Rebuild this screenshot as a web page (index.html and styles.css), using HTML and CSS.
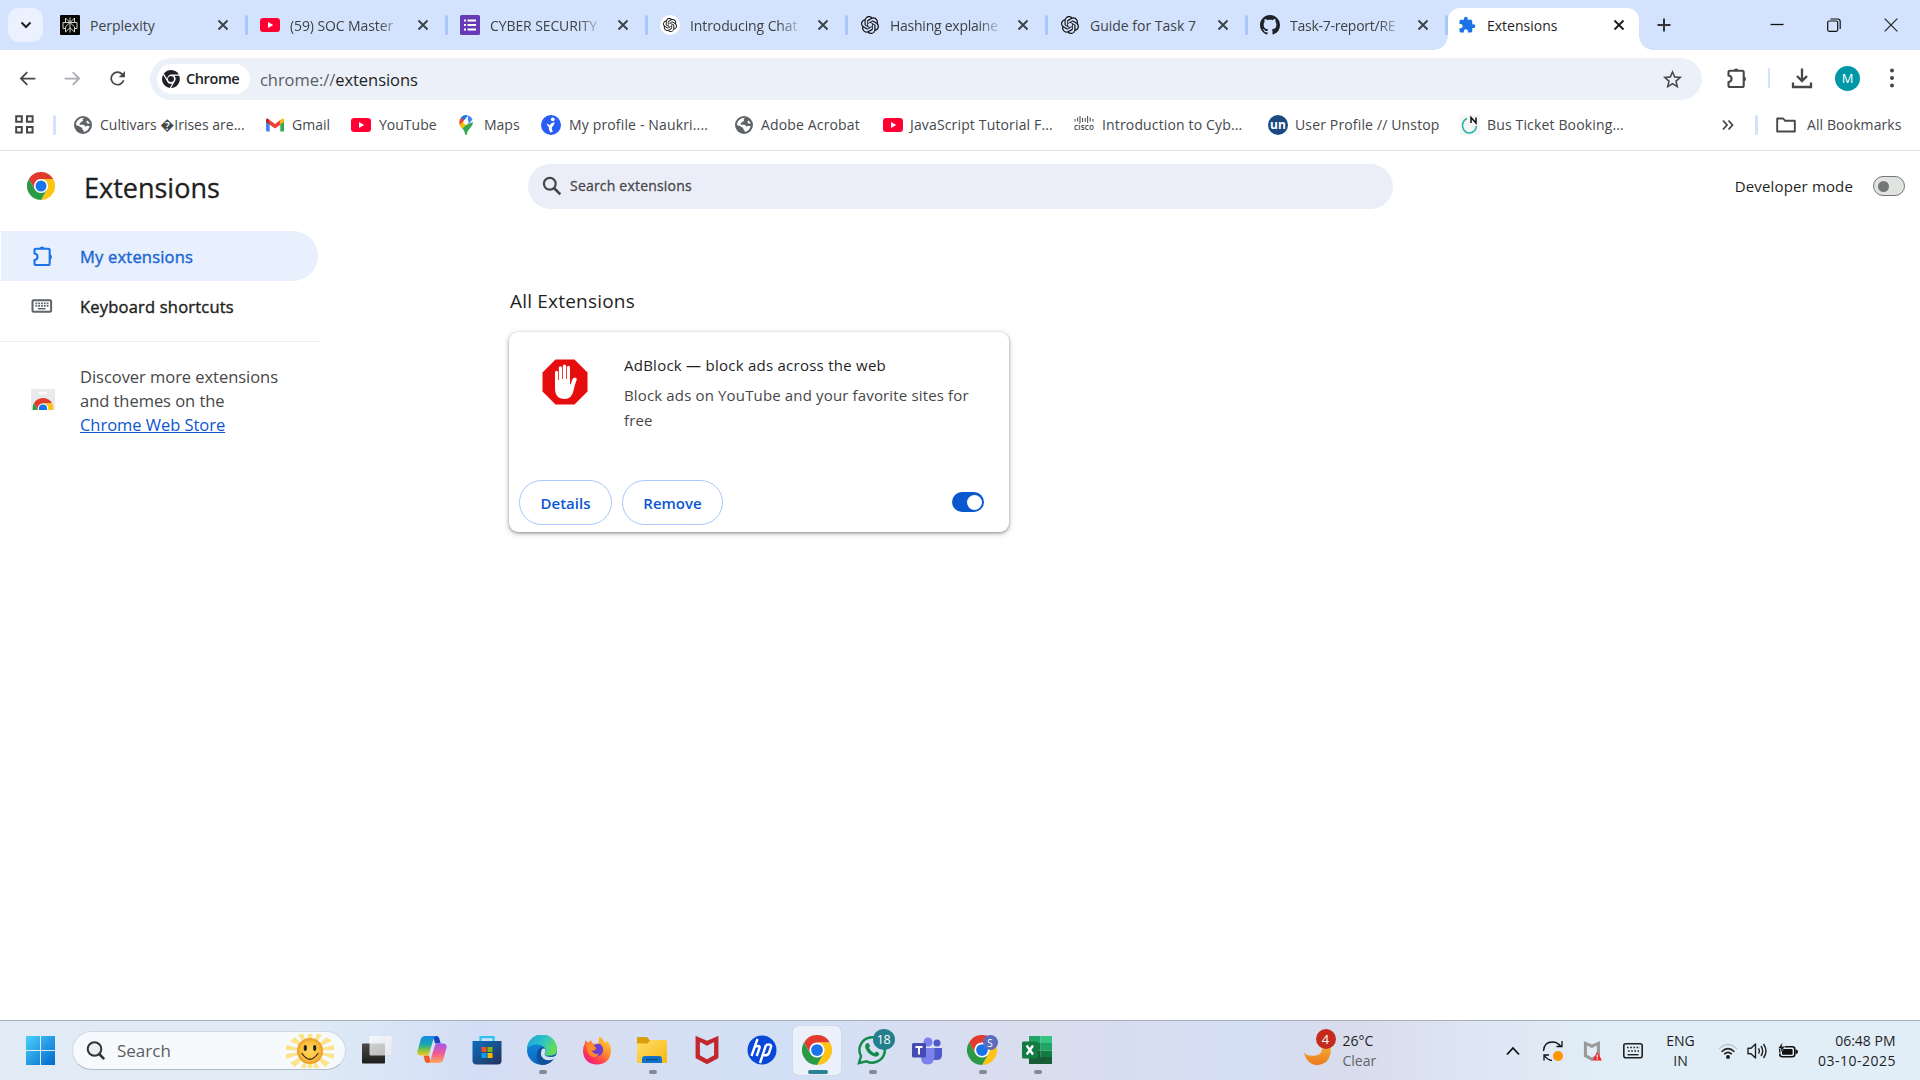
FILE: index.html
```html
<!DOCTYPE html>
<html lang="en">
<head>
<meta charset="utf-8">
<title>Extensions</title>
<link rel="stylesheet" href="styles.css">
</head>
<body>
<svg class="sprite" width="0" height="0" aria-hidden="true">
  <defs>
    <linearGradient id="g-win" x1="0" y1="0" x2="1" y2="1"><stop offset="0" stop-color="#4cd0fb"/><stop offset="1" stop-color="#0067cc"/></linearGradient>
    <linearGradient id="g-cop1" x1="0" y1="0" x2="0" y2="1"><stop offset="0" stop-color="#1489e8"/><stop offset=".45" stop-color="#1ba9a8"/><stop offset=".75" stop-color="#8fc43c"/><stop offset="1" stop-color="#f8c91c"/></linearGradient>
    <linearGradient id="g-cop2" x1="0" y1="0" x2="0" y2="1"><stop offset="0" stop-color="#a457ee"/><stop offset=".5" stop-color="#ee5a94"/><stop offset="1" stop-color="#ffab5a"/></linearGradient>
    <linearGradient id="g-store" x1="0" y1="0" x2="1" y2="1"><stop offset="0" stop-color="#0a70c0"/><stop offset="1" stop-color="#27305a"/></linearGradient>
    <linearGradient id="g-edge" x1="0" y1="0" x2="1" y2=".4"><stop offset="0" stop-color="#1a9fe0"/><stop offset=".6" stop-color="#2fc5c4"/><stop offset="1" stop-color="#62dc57"/></linearGradient>
    <linearGradient id="g-edge2" x1="0" y1="0" x2="0" y2="1"><stop offset="0" stop-color="#1590df"/><stop offset="1" stop-color="#0a68c4"/></linearGradient>
    <linearGradient id="g-fox" x1="1" y1="0" x2=".2" y2="1"><stop offset="0" stop-color="#ffe03c"/><stop offset=".4" stop-color="#ff9a2a"/><stop offset=".75" stop-color="#ff3f4d"/><stop offset="1" stop-color="#f0158c"/></linearGradient>
    <linearGradient id="g-fold" x1="0" y1="0" x2="1" y2="1"><stop offset="0" stop-color="#ffdf6a"/><stop offset="1" stop-color="#f9b811"/></linearGradient>
    <linearGradient id="g-moon" x1="0" y1="0" x2="0" y2="1"><stop offset="0" stop-color="#f6b73c"/><stop offset="1" stop-color="#ea7a1d"/></linearGradient>
    <linearGradient id="g-pane" x1="0" y1="0" x2="1" y2="1"><stop offset="0" stop-color="#fff"/><stop offset="1" stop-color="#dcdcdc"/></linearGradient>
    <radialGradient id="g-sun"><stop offset="0" stop-color="#ffd75c"/><stop offset=".7" stop-color="#fdbf3c"/><stop offset="1" stop-color="#e79a2b"/></radialGradient>
  </defs>
  <symbol id="chrome" viewBox="0 0 48 48">
    <circle cx="24" cy="24" r="14" fill="#fff"/>
    <path fill="#e23b2e" d="M24 12h20.8A24 24 0 0 0 3.2 12l10.4 18A12 12 0 0 1 24 12z"/>
    <path fill="#fdc414" d="M44.8 12H24a12 12 0 0 1 10.4 18L24 48a24 24 0 0 0 20.8-36z"/>
    <path fill="#2b9a47" d="M13.6 30L3.2 12A24 24 0 0 0 24 48l10.4-18a12 12 0 0 1-20.8 0z"/>
    <circle cx="24" cy="24" r="9.4" fill="#1a73e8"/>
  </symbol>
  <symbol id="chrome-mono" viewBox="0 0 48 48">
    <path d="M24 12h20.8A24 24 0 0 0 5 9.500l9 15A12 12 0 0 1 24 12zM46 15.500H33a12 12 0 0 1 1.400 14.500L24 48a24 24 0 0 0 22-32.500zM13 29L3 12.500A24 24 0 0 0 20.500 47.800L27 36.500A12 12 0 0 1 13 29z" fill="#202124"/>
    <circle cx="24" cy="24" r="8" fill="#202124"/>
  </symbol>
  <symbol id="x" viewBox="0 0 12 12"><path d="M1.500 1.500l9 9M10.500 1.500l-9 9" stroke="currentColor" stroke-width="1.900" fill="none"/></symbol>
  <symbol id="yt" viewBox="0 0 20 14"><rect width="20" height="14" rx="3.200" fill="#ff0033"/><path d="M8 4l5.200 3L8 10z" fill="#fff"/></symbol>
  <symbol id="openai" viewBox="0 0 24 24"><path fill="#111" d="M22.2819 9.8211a5.9847 5.9847 0 0 0-.5157-4.9108 6.0462 6.0462 0 0 0-6.5098-2.9A6.0651 6.0651 0 0 0 4.9807 4.1818a5.9847 5.9847 0 0 0-3.9977 2.9 6.0462 6.0462 0 0 0 .7427 7.0966 5.98 5.98 0 0 0 .511 4.9107 6.051 6.051 0 0 0 6.5146 2.9001A5.9847 5.9847 0 0 0 13.2599 24a6.0557 6.0557 0 0 0 5.7718-4.2058 5.9894 5.9894 0 0 0 3.9977-2.9001 6.0557 6.0557 0 0 0-.7475-7.0729zm-9.022 12.6081a4.4755 4.4755 0 0 1-2.8764-1.0408l.1419-.0804 4.7783-2.7582a.7948.7948 0 0 0 .3927-.6813v-6.7369l2.02 1.1686a.071.071 0 0 1 .038.052v5.5826a4.504 4.504 0 0 1-4.4945 4.4944zm-9.6607-4.1254a4.4708 4.4708 0 0 1-.5346-3.0137l.142.0852 4.783 2.7582a.7712.7712 0 0 0 .7806 0l5.8428-3.3685v2.3324a.0804.0804 0 0 1-.0332.0615L9.74 19.9502a4.4992 4.4992 0 0 1-6.1408-1.6464zM2.3408 7.8956a4.485 4.485 0 0 1 2.3655-1.9728V11.6a.7664.7664 0 0 0 .3879.6765l5.8144 3.3543-2.0201 1.1685a.0757.0757 0 0 1-.071 0l-4.8303-2.7865A4.504 4.504 0 0 1 2.3408 7.872zm16.5963 3.8558L13.1038 8.364 15.1192 7.2a.0757.0757 0 0 1 .071 0l4.8303 2.7913a4.4944 4.4944 0 0 1-.6765 8.1042v-5.6772a.79.79 0 0 0-.407-.667zm2.0107-3.0231l-.142-.0852-4.7735-2.7818a.7759.7759 0 0 0-.7854 0L9.409 9.2297V6.8974a.0662.0662 0 0 1 .0284-.0615l4.8303-2.7866a4.4992 4.4992 0 0 1 6.6802 4.66zM8.3065 12.863l-2.02-1.1638a.0804.0804 0 0 1-.038-.0567V6.0742a4.4992 4.4992 0 0 1 7.3757-3.4537l-.142.0805L8.704 5.459a.7948.7948 0 0 0-.3927.6813zm1.0976-2.3654l2.602-1.4998 2.6069 1.4998v2.9994l-2.5974 1.4997-2.6067-1.4997Z"/></symbol>
  <symbol id="globe" viewBox="0 0 18 18"><circle cx="9" cy="9" r="9" fill="#5f6368"/><path d="M10.500 1.800c-1.500.4-2.200 1.500-1.600 2.400.5.800-.6 1.300-1.500 1.500-.9.200-.6 1.400-1.600 1.700-.8.200-.5 1.100.2 1.300h3.200c1.500 0 1.400 1.700 2.600 1.900 1 .1 1.300-.9 2.400-.7l1.500.2C15 13 13 15.600 9.800 16.100l-.3-1.500c0-1-1.300-1-1.300-2.200 0-1-1.200-.9-2-1.600C5.200 9.900 3 9.300 1.900 9.300 2 5 5.800 1.500 10.500 1.800z" fill="#fff"/><path d="M13.200 4.500c1.400.7 2.300 2 2.500 3.300l-1.900-.4c-1.400-.2-1.900-2-.6-2.900z" fill="#fff"/></symbol>
  <symbol id="piece" viewBox="0 0 22 22"><path d="M2.500 5.200Q2.500 3.700 4 3.700H16.200Q17.700 3.700 17.700 5.200V18.500Q17.700 20 16.200 20H4Q2.500 20 2.500 18.500V15.200Q5.600 14.500 5.600 11.800T2.500 8.500Z" fill="none" stroke="currentColor" stroke-width="2.100"/><path d="M7.500 3.500a2.700 2.700 0 0 1 5.200 0zM18 9.300a2.700 2.700 0 0 1 0 5.200z" fill="currentColor"/></symbol>
  <symbol id="shield" viewBox="0 0 28 34"><path fill-rule="evenodd" d="M0 0l14 6L28 0v26.500L14 34 0 26.500zM5.500 7.500v15.700L14 28l8.500-4.800V7.500L14 12z" fill="currentColor"/></symbol>
</svg>

<header class="tabstrip">
  <button class="tabsearch"><svg width="12" height="8" viewBox="0 0 12 8"><path d="M1.500 1.500L6 6l4.500-4.500" fill="none" stroke="#1f1f1f" stroke-width="2"/></svg></button>
  <div class="tab"><svg class="fav" viewBox="0 0 20 20"><rect width="20" height="20" rx="1" fill="#060606"/><path d="M10 2.500v15M5.500 3v4.500h9V3L10 7.500zM5.500 7.500H3v6h2.500M14.500 7.500H17v6h-2.500M10 7.500l-4.500 4.300V17L10 12.700 14.500 17v-5.200z" fill="none" stroke="#d6d3cc" stroke-width="1"/></svg><span class="title">Perplexity</span><svg class="close"><use href="#x"/></svg></div>
  <div class="tab"><svg class="fav" viewBox="0 -3 20 20"><use href="#yt" width="20" height="14"/></svg><span class="title fade">(59) SOC Master</span><svg class="close"><use href="#x"/></svg></div>
  <div class="tab"><svg class="fav" viewBox="0 0 20 20"><rect width="20" height="20" rx="1.500" fill="#673ab7"/><path d="M7.500 5.500H16M7.500 10H16M7.500 14.500H16" stroke="#fff" stroke-width="2"/><path d="M4 5.500h2M4 10h2M4 14.500h2" stroke="#fff" stroke-width="2"/></svg><span class="title fade">CYBER SECURITY</span><svg class="close"><use href="#x"/></svg></div>
  <div class="tab"><svg class="fav" viewBox="0 0 20 20"><circle cx="10" cy="10" r="10" fill="#fff"/><use href="#openai" x="3" y="3" width="14" height="14"/></svg><span class="title fade">Introducing Chat</span><svg class="close"><use href="#x"/></svg></div>
  <div class="tab"><svg class="fav" viewBox="0 0 20 20"><use href="#openai" x="1" y="1" width="18" height="18"/></svg><span class="title fade tight">Hashing explaine</span><svg class="close"><use href="#x"/></svg></div>
  <div class="tab"><svg class="fav" viewBox="0 0 20 20"><use href="#openai" x="1" y="1" width="18" height="18"/></svg><span class="title">Guide for Task 7</span><svg class="close"><use href="#x"/></svg></div>
  <div class="tab"><svg class="fav" viewBox="0 0 16 16"><path fill="#1f2328" d="M8 0C3.580 0 0 3.580 0 8c0 3.540 2.290 6.530 5.470 7.590.4.070.55-.17.55-.38 0-.19-.01-.82-.01-1.490-2.010.37-2.530-.49-2.690-.94-.09-.23-.48-.94-.82-1.130-.28-.15-.68-.52-.01-.53.63-.01 1.080.58 1.230.82.720 1.210 1.870.87 2.330.66.070-.52.28-.87.51-1.070-1.780-.2-3.640-.89-3.640-3.950 0-.87.31-1.590.82-2.150-.08-.2-.36-1.020.08-2.120 0 0 .67-.21 2.200.82.640-.18 1.320-.27 2-.27s1.360.09 2 .27c1.530-1.040 2.200-.82 2.200-.82.440 1.100.16 1.920.08 2.120.51.560.82 1.270.82 2.150 0 3.070-1.870 3.750-3.650 3.950.29.250.54.730.54 1.480 0 1.070-.01 1.930-.01 2.200 0 .21.150.46.550.38A8.010 8.010 0 0 0 16 8c0-4.420-3.580-8-8-8z"/></svg><span class="title fade tight">Task-7-report/RE</span><svg class="close"><use href="#x"/></svg></div>
  <div class="tab active"><svg class="fav" viewBox="0 0 24 24"><path fill="#1a73e8" d="M20.500 11H19V7c0-1.100-.9-2-2-2h-4V3.500C13 2.120 11.880 1 10.500 1S8 2.120 8 3.500V5H4c-1.100 0-1.990.9-1.990 2v3.800H3.500c1.490 0 2.700 1.210 2.700 2.700s-1.210 2.700-2.700 2.700H2V20c0 1.100.9 2 2 2h3.800v-1.500c0-1.490 1.210-2.700 2.700-2.700s2.700 1.210 2.700 2.700V22H17c1.100 0 2-.9 2-2v-4h1.500c1.380 0 2.500-1.120 2.500-2.500S21.880 11 20.500 11z"/></svg><span class="title">Extensions</span><svg class="close"><use href="#x"/></svg></div>
  <svg class="plus" width="14" height="14" viewBox="0 0 14 14"><path d="M7 .5v13M.5 7h13" stroke="#333" stroke-width="2"/></svg>
  <div class="wincontrols">
    <svg width="14" height="14" viewBox="0 0 14 14"><path d="M.5 6.500h13" stroke="#111" stroke-width="1.300"/></svg>
    <svg width="14" height="14" viewBox="0 0 14 14"><rect x=".7" y="3" width="10" height="10.300" rx="1.500" fill="none" stroke="#111" stroke-width="1.200"/><path d="M3.500 1h7q2.700 0 2.700 2.700V11" fill="none" stroke="#111" stroke-width="1.200"/></svg>
    <svg width="14" height="14" viewBox="0 0 14 14"><path d="M.7.700l12.600 12.600M13.300.700L.7 13.300" stroke="#222" stroke-width="1.200"/></svg>
  </div>
</header>

<nav class="toolbar">
  <svg class="ic" viewBox="0 0 24 24"><path fill="#474747" d="M21 11H7L12.400 5.400 11 4l-8 8 8 8 1.400-1.400L7 13h14z"/></svg>
  <svg class="ic" viewBox="0 0 24 24"><path fill="#a9acb0" d="M3 11h14l-5.400-5.600L13 4l8 8-8 8-1.400-1.400L17 13H3z"/></svg>
  <svg class="ic" viewBox="0 0 24 24"><path fill="#474747" d="M18 6.200A8.200 8.200 0 1 0 20 14h-2.100A6.200 6.200 0 1 1 16.400 7.600L13.300 10.500H20.500V3.300z"/></svg>
  <div class="omnibox">
    <span class="chip"><svg width="18" height="18"><use href="#chrome-mono"/></svg><b>Chrome</b></span>
    <span class="url"><i>chrome://</i>extensions</span>
    <svg class="star" width="23" height="23" viewBox="0 0 24 24"><path fill="#474747" d="M22 9.240l-7.190-.62L12 2 9.190 8.630 2 9.240l5.460 4.730L5.820 21 12 17.270 18.180 21l-1.630-7.030L22 9.240zM12 15.400l-3.760 2.270 1-4.280-3.320-2.880 4.380-.38L12 6.100l1.710 4.040 4.380.38-3.320 2.880 1 4.280L12 15.400z"/></svg>
  </div>
  <svg class="tpiece" width="22" height="22"><use href="#piece"/></svg>
  <span class="tsep"></span>
  <svg width="22" height="22" viewBox="0 0 22 22"><path d="M11 1.500v12M6 9l5 5 5-5M2 15.500V20h18v-4.500" fill="none" stroke="#474747" stroke-width="2.300"/></svg>
  <span class="avatar">M</span>
  <svg width="6" height="20" viewBox="0 0 6 20"><g fill="#474747"><circle cx="3" cy="2.500" r="2"/><circle cx="3" cy="10" r="2"/><circle cx="3" cy="17.500" r="2"/></g></svg>
</nav>

<nav class="bookmarks">
  <svg width="19" height="19" viewBox="0 0 19 19"><path d="M1.200 1.200h5.600v5.600H1.200zM12 1.200h5.600v5.600H12zM1.200 12h5.600v5.600H1.200zM12 12h5.600v5.600H12z" fill="none" stroke="#474747" stroke-width="2"/></svg>
  <span class="sep"></span>
  <a class="bm near"><svg viewBox="-1 -1 20 20"><use href="#globe" width="18" height="18"/></svg><span>Cultivars �Irises are...</span></a>
  <a class="bm near"><svg viewBox="0 0 20 20"><path fill="#4285f4" d="M1 4.500v11q0 1 1 1h2.700V8z"/><path fill="#34a853" d="M19 4.500v11q0 1-1 1h-2.700V8z"/><path fill="#fbbc04" d="M15.300 5L17 3.700Q19 3 19 5v1.700l-3.700 3z"/><path fill="#ea4335" d="M4.700 5L10 9l5.300-4v4.700L10 13.500 4.700 9.700z"/><path fill="#c5221f" d="M4.700 5L3 3.700Q1 3 1 5v1.700l3.700 3z"/></svg><span>Gmail</span></a>
  <a class="bm"><svg viewBox="0 -3 20 20"><use href="#yt" width="20" height="14"/></svg><span>YouTube</span></a>
  <a class="bm"><svg viewBox="0 0 20 20"><path fill="#34a853" d="M16.900 7c0 5.500-5.200 6.500-5.800 11.600Q11 20 10 20t-1.100-1.400C8.600 15.500 6.800 14 5.200 12z"/><path fill="#fbbc04" d="M7.600 5.400L3.700 10Q4.500 12 6.400 13.600L12.500 8z"/><path fill="#1a73e8" d="M5 2.500A7 7 0 0 1 12 .4L7.600 6z"/><path fill="#ea4335" d="M5 2.500Q2.500 6 3.700 10l4.400-4.600z"/><path fill="#4285f4" d="M12 .4Q15.500 1.400 16.500 4.500l-5 6z"/><circle cx="10" cy="7" r="2.600" fill="#fff"/></svg><span>Maps</span></a>
  <a class="bm wide"><svg viewBox="0 0 20 20"><circle cx="10" cy="10" r="10" fill="#275df5"/><circle cx="11.800" cy="4.300" r="1.900" fill="#fff"/><path d="M13.800 7Q10 7.500 8.300 10.500 7 13.500 9.300 17.500l2.500-.8Q10.300 13.500 11 12.300q2-1.300 2.800-5.300z" fill="#fff"/><path d="M5.700 8.500q2 .3 3 2l-.8 1.500q-1.500-1-2.200-3.500z" fill="#fff"/></svg><span>My profile - Naukri....</span></a>
  <a class="bm near wide"><svg viewBox="-1 -1 20 20"><use href="#globe" width="18" height="18"/></svg><span>Adobe Acrobat</span></a>
  <a class="bm near wide"><svg viewBox="0 -3 20 20"><use href="#yt" width="20" height="14"/></svg><span>JavaScript Tutorial F...</span></a>
  <a class="bm wide"><svg viewBox="0 0 20 20"><path d="M1 4v2.500M3.600 2.500v4M6 1v7M8.500 3v4M11.200 3v4M13.600 1v7M16.200 2.500v4M19 4v2.500" stroke="#555" stroke-width="1.100"/><text x="0" y="14.500" font-size="8" font-weight="600" fill="#444" textLength="20" font-family="Open Sans, sans-serif">cisco</text></svg><span>Introduction to Cyb...</span></a>
  <a class="bm near wide"><svg viewBox="0 0 20 20"><circle cx="10" cy="10" r="10" fill="#1c4980"/><text x="10" y="14" font-size="12" font-weight="700" fill="#fff" text-anchor="middle" font-family="Open Sans, sans-serif">un</text></svg><span>User Profile // Unstop</span></a>
  <a class="bm near wide"><svg viewBox="0 0 20 20"><rect width="20" height="20" fill="#f6f6f6"/><path d="M7 3.500A7 7.500 0 1 0 16.500 11" fill="none" stroke="#1fb5a8" stroke-width="1.600"/><path d="M11 8V2.500L16 8V2.500" fill="none" stroke="#111" stroke-width="1.500"/></svg><span>Bus Ticket Booking...</span></a>
  <svg width="14" height="12" viewBox="0 0 14 12"><path d="M2 1.500L6 6l-4 4.500M7.500 1.500l4 4.500-4 4.500" fill="none" stroke="#474747" stroke-width="1.800"/></svg>
  <span class="sep"></span>
  <a class="bm all"><svg viewBox="0 0 20 20"><path d="M1.200 16.500v-13h6l2 2.300h9.600v10.700z" fill="none" stroke="#474747" stroke-width="1.900" stroke-linejoin="round"/></svg><span>All Bookmarks</span></a>
</nav>

<main class="page">
  <div class="pagehead">
    <div class="brand"><svg width="28" height="28"><use href="#chrome"/></svg><h1>Extensions</h1></div>
    <div class="searchbox"><svg width="20" height="20" viewBox="0 0 20 20"><circle cx="7.800" cy="7.800" r="5.900" fill="none" stroke="#474747" stroke-width="2.200"/><path d="M12 12l6.300 6.300" stroke="#474747" stroke-width="2.600"/></svg><span>Search extensions</span></div>
    <div class="devmode"><span>Developer mode</span><i class="switch-off"></i></div>
  </div>
  <div class="cols">
    <aside class="sidebar">
      <a class="nav selected"><svg width="22" height="22"><use href="#piece"/></svg><span>My extensions</span></a>
      <a class="nav"><svg width="22" height="22" viewBox="0 0 22 22"><rect x="1.500" y="5.200" width="18.600" height="11.500" rx="1" fill="none" stroke="#5f6368" stroke-width="2"/><path d="M4.500 8.300h13M4.500 10.800h13" stroke="#5f6368" stroke-width="1.700" stroke-dasharray="1.800 1"/><path d="M7 13.700h7.500" stroke="#5f6368" stroke-width="1.500"/></svg><span>Keyboard shortcuts</span></a>
      <div class="discover">
        <svg width="24" height="22" viewBox="0 0 24 22"><path d="M0 0h24v20q0 1-1 1H1q-1 0-1-1z" fill="#e8eaed"/><rect x="8" y="2.800" width="8" height="2.400" rx="1.200" fill="#fff"/><svg x="0" y="0" width="24" height="21"><use href="#chrome" x="1.500" y="9" width="21" height="21"/></svg></svg>
        <p>Discover more extensions<br>and themes on the<br><a>Chrome Web Store</a></p>
      </div>
    </aside>
    <section class="content">
      <h2>All Extensions</h2>
      <article class="card">
        <div class="info">
          <svg width="46" height="46" viewBox="0 0 46 46"><path d="M13.500.5h19L45.500 13.500v19L32.500 45.500h-19L.5 32.500v-19z" fill="#e50d0d"/><path d="M13 24V13.500q0-1.700 1.500-1.700t1.500 1.700V21h.8V9q0-1.800 1.600-1.800T20 9v11h.8V7.300Q20.800 5.500 22.500 5.500t1.700 1.800V20h.8V8.500q0-1.700 1.500-1.700T28 8.500V26q1.200-2 1.900-4.500.9-3 3-3 2.100.3 1.900 2-2 5-3 10-1.800 9.500-9.300 9.500Q13 40 13 29z" fill="#fff"/></svg>
          <div class="desc"><h3>AdBlock — block ads across the web</h3><p>Block ads on YouTube and your favorite sites for<br>free</p></div>
        </div>
        <div class="actions"><button class="btn det">Details</button><button class="btn rem">Remove</button><i class="switch-on"></i></div>
      </article>
    </section>
  </div>
</main>

<footer class="taskbar">
  <svg class="win" width="29" height="29" viewBox="0 0 29 29"><path d="M0 0h14v14H0zM15 0h14v14H15zM0 15h14v14H0zM15 15h14v14H15z" fill="url(#g-win)"/></svg>
  <div class="tsearch">
    <svg width="20" height="20" viewBox="0 0 20 20"><circle cx="8.500" cy="8" r="6.800" fill="#eceff2" stroke="#333" stroke-width="2"/><path d="M13.200 13l5 5.200" stroke="#333" stroke-width="2.600"/></svg><span>Search</span>
    <svg class="sun" width="50" height="34" viewBox="-25 -17 50 34"><path d="M0 0L-3-19H3zM0 0L7-18l5 2zM0 0L17-14l5 4zM0 0L24-6V-1zM0 0L24 3V8zM0 0L20 12l-5 4zM0 0L10 18l-5 1zM0 0L3 19h-6zM0 0L-5 19l-5-1zM0 0L-15 16l-5-4zM0 0L-24 8V3zM0 0L-24-1V-6zM0 0L-20-10l5-4zM0 0L-12-16l5-2z" fill="#fbe48a"/><circle r="13" fill="url(#g-sun)"/><ellipse cx="-4.700" cy="-3" rx="1.600" ry="3" fill="#222"/><ellipse cx="4.700" cy="-3" rx="1.600" ry="3" fill="#222"/><path d="M-8 2.500Q0 14 8 2.500" fill="none" stroke="#3a2a18" stroke-width="1.300" stroke-linecap="round"/></svg>
  </div>
  <div class="apps">
    <div class="app"><svg viewBox="0 0 30 30"><defs><linearGradient id="g-dk" x1="0" y1="0" x2="0" y2="1"><stop offset="0" stop-color="#4a4a48"/><stop offset="1" stop-color="#1d1d1d"/></linearGradient></defs><rect x="0" y="8.500" width="23" height="20" rx="1" fill="url(#g-dk)"/><rect x="7.500" y="1" width="22.500" height="19.500" rx="1" fill="url(#g-pane)" opacity=".78"/><path d="M23 8.500V1.500h6.500v18.500H23z" fill="#fff" opacity=".3"/></svg></div>
    <div class="app"><svg viewBox="0 0 30 30"><path d="M16 1h3.500q2 0 2.600 2l1.700 5.500H18z" fill="#1745c0"/><path d="M14 28h-3.500q-2 0-2.600-2L6.500 20.500H12z" fill="#f0592c"/><path d="M8.500 1H19q-1.700.5-2.500 3l-4 13.500q-.8 3-3.500 3H4Q-.5 20.500.6 16L3.500 5Q4.500 1 8.500 1z" fill="url(#g-cop1)"/><path d="M21.500 28H11q1.700-.5 2.500-3l4-13.500q.8-3 3.500-3h5q4.500 0 3.400 4.500L26.500 24q-1 4-5 4z" fill="url(#g-cop2)"/></svg></div>
    <div class="app"><svg viewBox="0 0 30 30"><path d="M8.500 7V2.200h13V7" fill="none" stroke="#2cc3f4" stroke-width="2.200"/><path d="M.5 6h29v19.500q0 4-4 4h-21q-4 0-4-4z" fill="url(#g-store)"/><path fill="#f25022" d="M9.500 12h5v5h-5z"/><path fill="#7fba00" d="M15.500 12h5v5h-5z"/><path fill="#00a4ef" d="M9.500 18h5v5h-5z"/><path fill="#ffb900" d="M15.500 18h5v5h-5z"/></svg></div>
    <div class="app open"><svg viewBox="0 0 30 30"><circle cx="15" cy="15" r="15" fill="url(#g-edge2)"/><path d="M0 14A15 15 0 0 1 30 14.500Q30 20 24 20.500 18 21 17.500 19 20 16 18 13 15 9.500 10 9.500 3 9.500 0 14z" fill="url(#g-edge)"/><path d="M10.500 16Q12 12 16 12q3.500 2 2 5.500-1.500 3 3 4 5 .5 7.500-2L26.500 24Q22 30 15 30 9 28 9.500 20z" fill="#0f5299"/><path d="M15 14q3.500-1.500 3.500 1.500 0 2-1 3.500.5 3 6 3 3.500 0 5.500-1.500v2.500Q22 27 17 24t-2-10z" fill="#d7e1f5"/></svg></div>
    <div class="app"><svg viewBox="0 0 30 30"><path d="M17.500 1q4 2.500 5.500 7l2-2q4.500 5 4 10.500Q28 29 15 29.500 2 29 1 16.500 1 11 3 8l.3-2.700L6.500 8l2-3 2.500 3.500 5.500.5Q16.500 4 17.500 1z" fill="url(#g-fox)"/><path d="M14 9q5-1.500 7 4 1 7-6 8.500-6-.5-6.500-6.500Q12 17 14.500 13.500 11.500 13 10 12z" fill="#6b3fd0"/><path d="M4 10q6-3 10 3-1 3-4.500 2.500Q12 20 17 18.500 14 24 9 21 4 17 4 10z" fill="#ff8a27"/></svg></div>
    <div class="app open"><svg viewBox="0 0 30 30"><path d="M0 3q0-1 1-1h9l3 3.500V9H0z" fill="#dd9e0b"/><path d="M0 8.500h10.500L13.500 5H29q1 0 1 1v22H0z" fill="url(#g-fold)"/><path d="M5 28v-4q0-3 3-3h14q3 0 3 3v4z" fill="#1075c9"/><path d="M9 24.500h12" stroke="#0a4c8f" stroke-width="1.600"/></svg></div>
    <div class="app"><svg viewBox="-3 0 36 34"><use href="#shield" x="1" y="0" width="28" height="34" color="#c1272d"/></svg></div>
    <div class="app"><svg viewBox="0 0 30 30"><circle cx="15" cy="15" r="14.500" fill="#0748d8"/><path d="M10.500 4L4.500 21M8.500 11.500q5-1.500 4 1.500L9.700 21M19 10l-6 18M19 10q6-1.500 5 2l-2 6q-1 3-6 2" fill="none" stroke="#fff" stroke-width="2.400"/></svg></div>
    <div class="app open current"><svg><use href="#chrome"/></svg></div>
    <div class="app open"><svg viewBox="0 0 30 30"><path d="M2 28l2-7A12.700 12.700 0 1 1 9.500 26.300z" fill="none" stroke="#128c4a" stroke-width="2.500"/><path d="M9.500 8.500q2.500-1.500 3.500 2.500l-1 2q2 4 5.500 5.200l1.700-1.600q4 1.400 2.800 3.400-2.500 3-7 .5-6-3.500-7-9 0-2 1.500-3z" fill="#128c4a"/></svg><span class="badge wa">18</span></div>
    <div class="app"><svg viewBox="0 0 30 30"><circle cx="16" cy="7" r="4.500" fill="#7b83eb"/><circle cx="25" cy="8" r="3.500" fill="#5059c9"/><path d="M19 13h11v7q0 5-5.500 5H19z" fill="#5059c9"/><path d="M9 13h13.500v9q-.5 7.500-7 7.500T9 22z" fill="#7b83eb"/><rect y="8" width="14" height="14.500" rx="1.500" fill="#444bb3"/><path d="M3.500 12h7M7 12v7.500" stroke="#fff" stroke-width="1.900"/></svg></div>
    <div class="app open"><svg><use href="#chrome"/></svg><span class="badge prof">S</span></div>
    <div class="app open"><svg viewBox="0 0 30 30"><path d="M7 1h11.500v9H7z" fill="#21a366"/><path d="M18.500 1H30v7H18.500z" fill="#33c481"/><path d="M7 8h11.500v7.500H7zM18.500 15.500H30V22H18.500z" fill="#107c41"/><path d="M18.500 8H30v7.500H18.500z" fill="#21a366"/><path d="M7 15.500h11.500V22H30v7H7z" fill="#185c37"/><rect y="6.500" width="16" height="17" rx="1.500" fill="#107c41"/><path d="M4.700 10.500l6.300 9M11 10.500l-6.300 9" stroke="#fff" stroke-width="2.300"/></svg></div>
  </div>
  <div class="weather"><div class="moonbox"><svg width="28" height="28" viewBox="0 0 28 28"><path d="M0 13Q3 18 12 16.500 20 15 18 5 24 0 26.500 7 28 17 22 23 15 28 8 25 1 21 0 13z" fill="url(#g-moon)"/></svg><span class="badge four">4</span></div><div class="wtext"><span>26°C</span><span class="clr">Clear</span></div></div>
  <div class="tray">
    <svg width="14" height="10" viewBox="0 0 14 10"><path d="M1 8.500l6-6.500 6 6.500" fill="none" stroke="#111" stroke-width="1.800"/></svg>
    <svg width="22" height="22" viewBox="0 0 22 22"><path d="M1.500 11Q2 2 10.500 2q5 0 8.500 4.500M20 1v5.500h-5.500M10 20.300q-4 0-7.500-4.500M2 20.500V15h5" fill="none" stroke="#111" stroke-width="1.300"/><circle cx="16" cy="16" r="5" fill="#ff9500"/></svg>
    <svg width="19" height="20" viewBox="0 0 30 34"><use href="#shield" width="28" height="34" color="#9a9a9a"/><path d="M23 18l8 15H15z" fill="#f0272d"/><path d="M23 23v5M23 29.500v2" stroke="#fff" stroke-width="2"/></svg>
    <svg width="20" height="16" viewBox="0 0 20 16"><rect x=".8" y=".8" width="18.400" height="14" rx="2" fill="none" stroke="#222" stroke-width="1.600"/><path d="M4 4.500h13M5 8h11" stroke="#222" stroke-width="1.600" stroke-dasharray="1.600 1.600"/><path d="M4.500 11.700h11" stroke="#222" stroke-width="1.400"/></svg>
    <div class="lang"><span>ENG</span><span>IN</span></div>
    <svg width="20" height="18" viewBox="0 0 20 18"><g fill="none" stroke="#222" stroke-width="1.600"><path d="M1 7q9-9 18 0" stroke="#bcc6ce"/><path d="M3.600 9.700q6.400-6.200 12.800 0M6.200 12.200q3.800-3.500 7.600 0"/></g><circle cx="10" cy="15" r="2" fill="#222"/></svg>
    <svg width="21" height="18" viewBox="0 0 21 18"><g fill="none" stroke="#222" stroke-width="1.400"><path d="M1 6.300h3L8.500 2v14L4 11.700H1z" stroke-linejoin="round"/><path d="M11.500 6.300q1.700 2.700 0 5.400M14 4q3.400 5 0 10M16.500 2q5 7 0 14"/></g></svg>
    <svg width="20" height="18" viewBox="0 0 20 18"><rect x="1.800" y="4.800" width="15" height="10" rx="2.500" fill="none" stroke="#111" stroke-width="1.600"/><rect x="4" y="7" width="10.600" height="5.700" rx="1" fill="#111"/><path d="M17.500 7.500q2.500 0 2.500 2.300t-2.500 2.300z" fill="#111"/><path d="M4.500 0L0 6.500h3L1.500 12 7 4.700H4z" fill="#111" stroke="#e1edf7" stroke-width=".6"/></svg>
    <div class="clock"><span>06:48 PM</span><span class="date">03-10-2025</span></div>
  </div>
</footer>
</body>
</html>
```
FILE: styles.css
```css
* { box-sizing: border-box; }
body {
  margin: 0;
  width: 1920px;
  height: 1080px;
  overflow: hidden;
  display: grid;
  grid-template-rows: 50px 56px 45px 1fr 60px;
  font-family: "Open Sans", "Noto Sans", sans-serif;
  color: #1f1f1f;
  background: #fff;
  white-space: nowrap;
}
h1, h2, h3, p { margin: 0; font-weight: 400; }
svg { display: block; flex: none; }
i { font-style: normal; }
button { font: inherit; padding: 0; border: 0; }
.sprite { position: absolute; }

/* tab strip */
.tabstrip { display: flex; align-items: center; background: #d3e2fd; padding-left: 8px; }
.tabsearch { width: 35px; height: 34px; border-radius: 11px; background: #ebf1fe; display: grid; place-items: center; margin-right: 3px; }
.tab { width: 200px; height: 50px; display: flex; align-items: center; padding-left: 14px; position: relative; }
.fav { width: 20px; height: 20px; margin-right: 10px; }
.title { width: 114px; overflow: hidden; font-size: 14px; color: #3f4246; margin-top: 1px; }
.fade { letter-spacing: -.1px; -webkit-mask-image: linear-gradient(90deg, #000 78%, transparent 99%); mask-image: linear-gradient(90deg, #000 78%, transparent 99%); }
.tight { letter-spacing: -.25px; }
.close { width: 12px; height: 12px; margin-left: 12.500px; color: #3c3f43; }
.tab:not(.active)::after { content: ""; width: 3px; height: 20px; border-radius: 2px; background: #a8c7fa; position: absolute; right: -2px; top: 15px; }
.tab.active { width: 191px; height: 42px; margin: 8px 0 0 2px; padding: 0 0 8px 10px; background: #fff; border-radius: 12px 12px 0 0; }
.tab.active::before { content: ""; position: absolute; left: -14px; right: -14px; bottom: 0; height: 14px; background: radial-gradient(circle at 0 0, transparent 13.500px, #fff 14px) left / 14px 14px no-repeat, radial-gradient(circle at 100% 0, transparent 13.500px, #fff 14px) right / 14px 14px no-repeat; }
.active .fav { width: 18px; height: 18px; margin-right: 11px; }
.active .title { width: 110px; color: #1f1f1f; }
.active .close { margin-left: 16px; color: #1f1f1f; }
.plus { margin-left: 18px; }
.wincontrols { display: flex; gap: 43px; margin-left: 99px; }

/* toolbar */
.toolbar { display: flex; align-items: center; padding: 0 25px 0 17px; }
.ic { width: 21px; height: 21px; margin-right: 24px; }
.omnibox { width: 1552px; height: 42px; border-radius: 21px; background: #ecf0f9; display: flex; align-items: center; padding: 0 18px 0 7px; margin: 2px 0 0 -2px; }
.chip { width: 93px; height: 30px; border-radius: 15px; background: #fff; display: flex; align-items: center; gap: 6px; padding-left: 5px; margin-top: -1px; }
.chip b { font-size: 14.500px; font-weight: 600; letter-spacing: -.4px; }
.url { font-size: 16.500px; letter-spacing: -.05px; margin: 1px 0 0 10px; }
.url i { color: #5b5e62; }
.star { margin-left: auto; }
.tpiece { margin: 0 20px 0 24px; color: #474747; }
.tsep { width: 2px; height: 20px; background: #d3e3fd; margin-right: 21px; }
.avatar { width: 25px; height: 25px; border-radius: 50%; background: #0097a7; color: #fff; font-size: 13px; display: grid; place-items: center; margin: 0 29px 0 22px; }

/* bookmarks bar */
.bookmarks { display: grid; grid-template-columns: 38px 20px 192px 86px 105px 85px 193px 149px 191px 194px 192px 261px 34px 21px 1fr; align-items: center; padding: 0 0 7px 15px; border-bottom: 1px solid #e0e1e3; }
.sep { width: 3px; height: 20px; border-radius: 2px; background: #d3e3fd; }
.bm { display: flex; align-items: center; gap: 8px; font-size: 14px; color: #45484c; }
.bm svg { width: 20px; height: 20px; }
.near { gap: 7px; }
.wide { letter-spacing: .15px; }
.all { gap: 11px; letter-spacing: .1px; }

/* page */
.page { display: grid; grid-template-rows: 72px 1fr; }
.pagehead { display: flex; align-items: center; padding: 0 15px 2px 27px; }
.brand { display: flex; align-items: center; width: 501px; gap: 29px; }
.brand h1 { font-size: 27px; font-weight: 500; margin-top: 2px; -webkit-text-stroke: .3px; }
.searchbox { width: 865px; height: 45px; border-radius: 23px; background: #ebeef8; display: flex; align-items: center; gap: 8px; padding-left: 14px; }
.searchbox span { font-size: 14px; font-weight: 500; letter-spacing: .2px; margin-top: -2px; color: #474747; -webkit-text-stroke: .3px; }
.devmode { display: flex; align-items: center; gap: 20px; margin-left: auto; font-size: 15px; letter-spacing: .15px; }
.switch-off { width: 32px; height: 20px; border-radius: 10px; border: 1px solid #747775; background: #e1e3e1; display: flex; align-items: center; padding-left: 4px; }
.switch-off::before { content: ""; width: 11px; height: 11px; border-radius: 50%; background: #747775; }
.cols { display: grid; grid-template-columns: 320px 1fr; }
.sidebar { padding-top: 8px; }
.nav { display: flex; align-items: center; width: 317px; height: 50px; margin-left: 1px; padding-left: 31px; gap: 26px; font-size: 16.500px; font-weight: 500; letter-spacing: .2px; -webkit-text-stroke: .4px; border-radius: 0 25px 25px 0; }
.nav svg { margin-right: 1px; margin-left: -1px; }
.selected { background: #e8effd; color: #1967d2; }
.selected svg { color: #1a73e8; margin: 0; }
.discover { display: flex; align-items: center; gap: 25px; margin-top: 10px; border-top: 1px solid #ebecee; padding: 23px 0 0 31px; font-size: 16.500px; letter-spacing: -.04px; line-height: 24px; color: #474747; }
.discover svg { margin-top: -2px; }
.discover a { color: #0b57d0; text-decoration: underline; }
.content { padding: 62px 0 0 189px; }
.content h2 { font-size: 19px; line-height: 32px; letter-spacing: .2px; padding-left: 1px; }
.card { width: 500px; height: 200px; margin-top: 15px; border-radius: 9px; background: #fff; box-shadow: 0 1px 3px rgba(60,64,67,.5), 0 2px 6px rgba(60,64,67,.22); }
.info { display: flex; height: 148px; padding: 22px 0 0 33px; gap: 36px; }
.info > svg { margin-top: 5px; }
.desc h3 { font-size: 15px; line-height: 24px; margin-top: -1px; letter-spacing: .25px; }
.desc p { font-size: 15px; line-height: 25px; margin-top: 6px; letter-spacing: .15px; color: #474747; }
.actions { display: flex; align-items: center; padding: 0 25px 0 10px; }
.btn { height: 45px; border: 1px solid #a8c7fa; border-radius: 23px; background: #fff; color: #0b57d0; font-size: 15px; font-weight: 600; }
.det { width: 93px; }
.rem { width: 101px; margin-left: 10px; }
.switch-on { width: 32px; height: 20px; border-radius: 10px; background: #0b57d0; margin: 0 0 1px auto; display: flex; align-items: center; justify-content: flex-end; padding-right: 2px; }
.switch-on::before { content: ""; width: 15px; height: 15px; border-radius: 50%; background: #fff; }

/* taskbar */
.taskbar { display: flex; align-items: center; padding-left: 26px; border-top: 1px solid #a9afb9; background: linear-gradient(90deg, #e0ebf6 0, #e0ebf6 300px, #d3def6 480px, #d8def1 560px, #d5dff3 680px, #d2e0f6 780px, #d6dff3 860px, #d9ddee 1040px, #d4def4 1250px, #d9dcec 1360px, #dde6f3 1470px, #e1edf7 1600px, #e1edf7 100%); }
.win { margin-right: 17px; }
.tsearch { width: 274px; height: 39px; border-radius: 20px; background: #f7fafd; border: 1px solid #cfd8e3; border-bottom-color: #b3bcc8; display: flex; align-items: center; padding: 0 10px 0 13px; }
.tsearch span { font-size: 17px; color: #5a5d61; margin-left: 11px; }
.sun { margin-left: auto; }
.apps { display: flex; margin-left: 3.500px; }
.app { width: 55px; height: 59px; display: grid; place-items: center; position: relative; }
.app > svg { width: 30px; height: 30px; position: relative; top: -1px; }
.app.open::after { content: ""; position: absolute; left: 24px; bottom: 6px; width: 8px; height: 4px; border-radius: 2px; background: #838993; }
.app.current::before { content: ""; position: absolute; left: 3.500px; top: 5px; width: 48px; height: 49px; border-radius: 5px; background: #ebf0fb; box-shadow: 0 0 1px #aab; }
.app.current::after { left: 18px; width: 20px; background: #2b8293; }
.badge { position: absolute; border-radius: 50%; color: #fff; display: grid; place-items: center; }
.wa { width: 22px; height: 21px; left: 28px; top: 8px; background: #237f8b; font-size: 12.500px; letter-spacing: -.3px; }
.prof { width: 15px; height: 15px; left: 28px; top: 14px; background: #5c6bc0; font-size: 10px; }
.weather { display: flex; margin-left: 239px; width: 189px; }
.moonbox { position: relative; width: 39px; height: 40px; padding-top: 8px; }
.four { width: 20px; height: 20px; left: 12px; top: -2px; background: #c42b1c; font-size: 13px; }
.wtext, .lang, .clock { display: grid; grid-template-rows: 20px 20px; font-size: 14px; line-height: 20px; }
.clr { color: #62656b; }
.tray { display: grid; grid-template-columns: 40px 40px 40px 40px 60px 30px 30px 30px 93px; align-items: center; justify-items: center; }
.lang { justify-items: center; margin-right: 4px; }
.clock { justify-self: end; text-align: right; }
.date { letter-spacing: .5px; margin-right: -.5px; }
```
